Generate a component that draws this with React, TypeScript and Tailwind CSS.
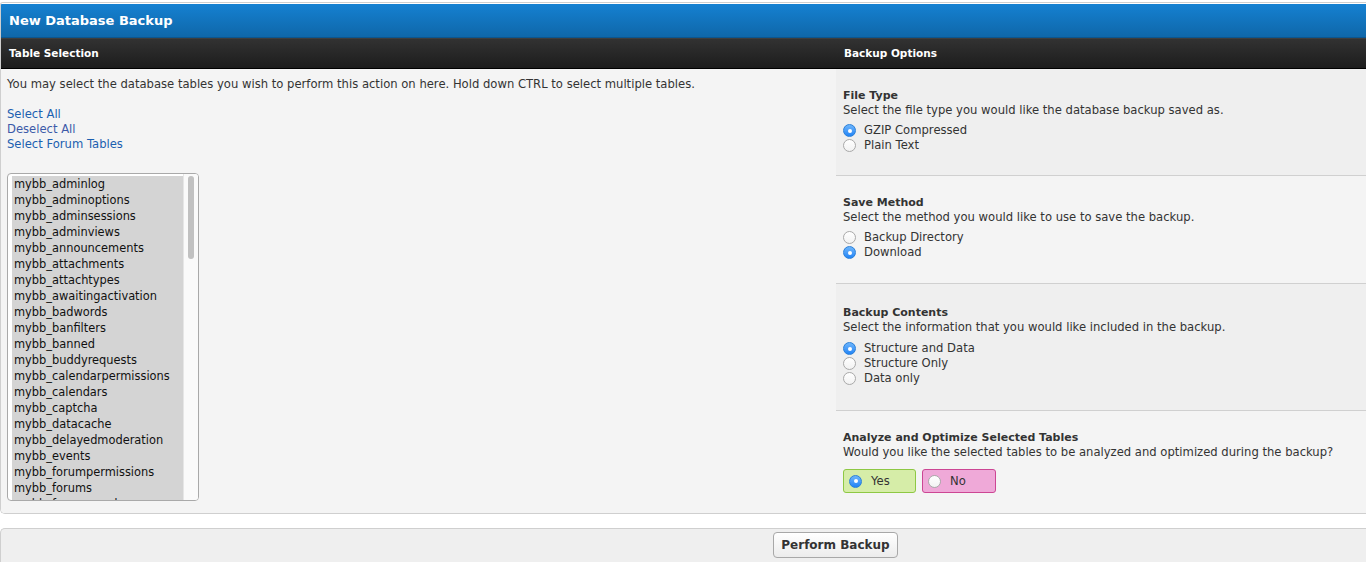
import React from "react";

const tables = [
  "adminlog",
  "adminoptions",
  "adminsessions",
  "adminviews",
  "announcements",
  "attachments",
  "attachtypes",
  "awaitingactivation",
  "badwords",
  "banfilters",
  "banned",
  "buddyrequests",
  "calendarpermissions",
  "calendars",
  "captcha",
  "datacache",
  "delayedmoderation",
  "events",
  "forumpermissions",
  "forums",
  "forumsread",
  "forumsubscriptions",
  "groupleaders",
  "helpdocs",
];

function Radio({ checked }: { checked?: boolean }) {
  if (checked) {
    return (
      <span className="w-[13px] h-[13px] rounded-full bg-gradient-to-b from-[#6db5fb] to-[#1e84f6] border border-[#2a7fd8] flex items-center justify-center shrink-0">
        <span className="w-[4px] h-[4px] rounded-full bg-white" />
      </span>
    );
  }
  return (
    <span className="w-[13px] h-[13px] rounded-full bg-gradient-to-b from-white to-[#f2f2f2] border border-[#a9a9a9] shrink-0" />
  );
}

function Option({ label, checked }: { label: string; checked?: boolean }) {
  return (
    <label className="flex items-center gap-[8px] h-[15px]">
      <Radio checked={checked} />
      <span>{label}</span>
    </label>
  );
}

interface SectionProps {
  title: string;
  desc: string;
  className: string;
  children: React.ReactNode;
}

function Section({ title, desc, className, children }: SectionProps) {
  return (
    <div className={`px-[7px] ${className}`}>
      <div className="font-bold text-[11px] text-[#333]">{title}</div>
      <div>{desc}</div>
      {children}
    </div>
  );
}

export default function App() {
  return (
    <div
      className="w-[1366px] h-[562px] bg-white text-[11.6px] leading-[15px] text-[#333] overflow-hidden"
      style={{ fontFamily: '"DejaVu Sans", Verdana, sans-serif' }}
    >
      <div className="mt-[2px] border-t border-l border-b border-[#cfcfcf] rounded-tl-[3px] rounded-bl-[5px] overflow-hidden">
        <div className="h-[35px] border-t border-white bg-gradient-to-b from-[#1581d2] to-[#0f67a9] border-b border-b-[#0b5690] flex items-center pl-[8px]">
          <h1 className="text-[13px] font-bold text-white">New Database Backup</h1>
        </div>
        <div className="flex h-[31px] bg-gradient-to-b from-[#323232] to-[#1d1d1d] border-t border-[#3e3e3e] border-b border-b-black text-white font-bold text-[10.5px]">
          <div className="w-[835px] pl-[8px] flex items-center">Table Selection</div>
          <div className="flex-1 pl-[8px] flex items-center">Backup Options</div>
        </div>
        <div className="flex">
          <div className="w-[835px] bg-[#f4f4f4] pl-[6px] pt-[8px]">
            <p>
              You may select the database tables you wish to perform this action on here. Hold down
              CTRL to select multiple tables.
            </p>
            <div className="mt-[15px] flex flex-col">
              <a className="text-[#1b5fb0]">Select All</a>
              <a className="text-[#3c5aa8]">Deselect All</a>
              <a className="text-[#1b5fb0]">Select Forum Tables</a>
            </div>
            <div className="mt-[21px] w-[192px] h-[328px] border border-[#a9a9a9] rounded-[4px] bg-white flex overflow-hidden">
              <div className="flex-1 pl-[4px] pt-[2px] overflow-hidden">
                <div className="bg-[#d4d4d4] text-[11.4px] leading-[16px] text-[#111]">
                  {tables.map((t) => (
                    <div key={t} className="pl-[2px]">
                      mybb_{t}
                    </div>
                  ))}
                </div>
              </div>
              <div className="w-[15px] border-l border-[#e6e6e6] bg-[#fafafa] pt-[2px] flex justify-center">
                <div className="w-[6px] h-[83px] rounded-full bg-[#c1c1c1]" />
              </div>
            </div>
          </div>
          <div className="flex-1 flex flex-col">
            <Section
              title="File Type"
              desc="Select the file type you would like the database backup saved as."
              className="bg-[#efefef] pt-[19px] pb-[22px] border-b border-[#d0d0d0]"
            >
              <div className="mt-[5px]">
                <Option label="GZIP Compressed" checked />
                <Option label="Plain Text" />
              </div>
            </Section>
            <Section
              title="Save Method"
              desc="Select the method you would like to use to save the backup."
              className="bg-[#f4f4f4] pt-[19px] pb-[23px] border-b border-[#d0d0d0]"
            >
              <div className="mt-[5px]">
                <Option label="Backup Directory" />
                <Option label="Download" checked />
              </div>
            </Section>
            <Section
              title="Backup Contents"
              desc="Select the information that you would like included in the backup."
              className="bg-[#efefef] pt-[21px] pb-[24px] border-b border-[#d0d0d0]"
            >
              <div className="mt-[6px]">
                <Option label="Structure and Data" checked />
                <Option label="Structure Only" />
                <Option label="Data only" />
              </div>
            </Section>
            <Section
              title="Analyze and Optimize Selected Tables"
              desc="Would you like the selected tables to be analyzed and optimized during the backup?"
              className="flex-1 bg-[#f4f4f4] pt-[19px] pb-[20px]"
            >
              <div className="mt-[9px] flex gap-[6px]">
                <label className="w-[73px] h-[24px] rounded-[3px] bg-[#d6eda8] border border-[#8ec844] flex items-center gap-[9px] pl-[5px]">
                  <Radio checked />
                  <span>Yes</span>
                </label>
                <label className="w-[74px] h-[24px] rounded-[3px] bg-[#efa9d8] border border-[#cc4694] flex items-center gap-[9px] pl-[5px]">
                  <Radio />
                  <span>No</span>
                </label>
              </div>
            </Section>
          </div>
        </div>
      </div>
      <div className="mt-[14px] h-[40px] bg-[#efefef] border-t border-l border-[#cfcfcf] rounded-tl-[5px] flex pt-[3px] pl-[772px]">
        <button className="w-[125px] h-[26px] rounded-[4px] border border-[#a8a8a8] bg-gradient-to-b from-white to-[#ececec] text-[12px] font-bold text-[#333]">
          Perform Backup
        </button>
      </div>
    </div>
  );
}
